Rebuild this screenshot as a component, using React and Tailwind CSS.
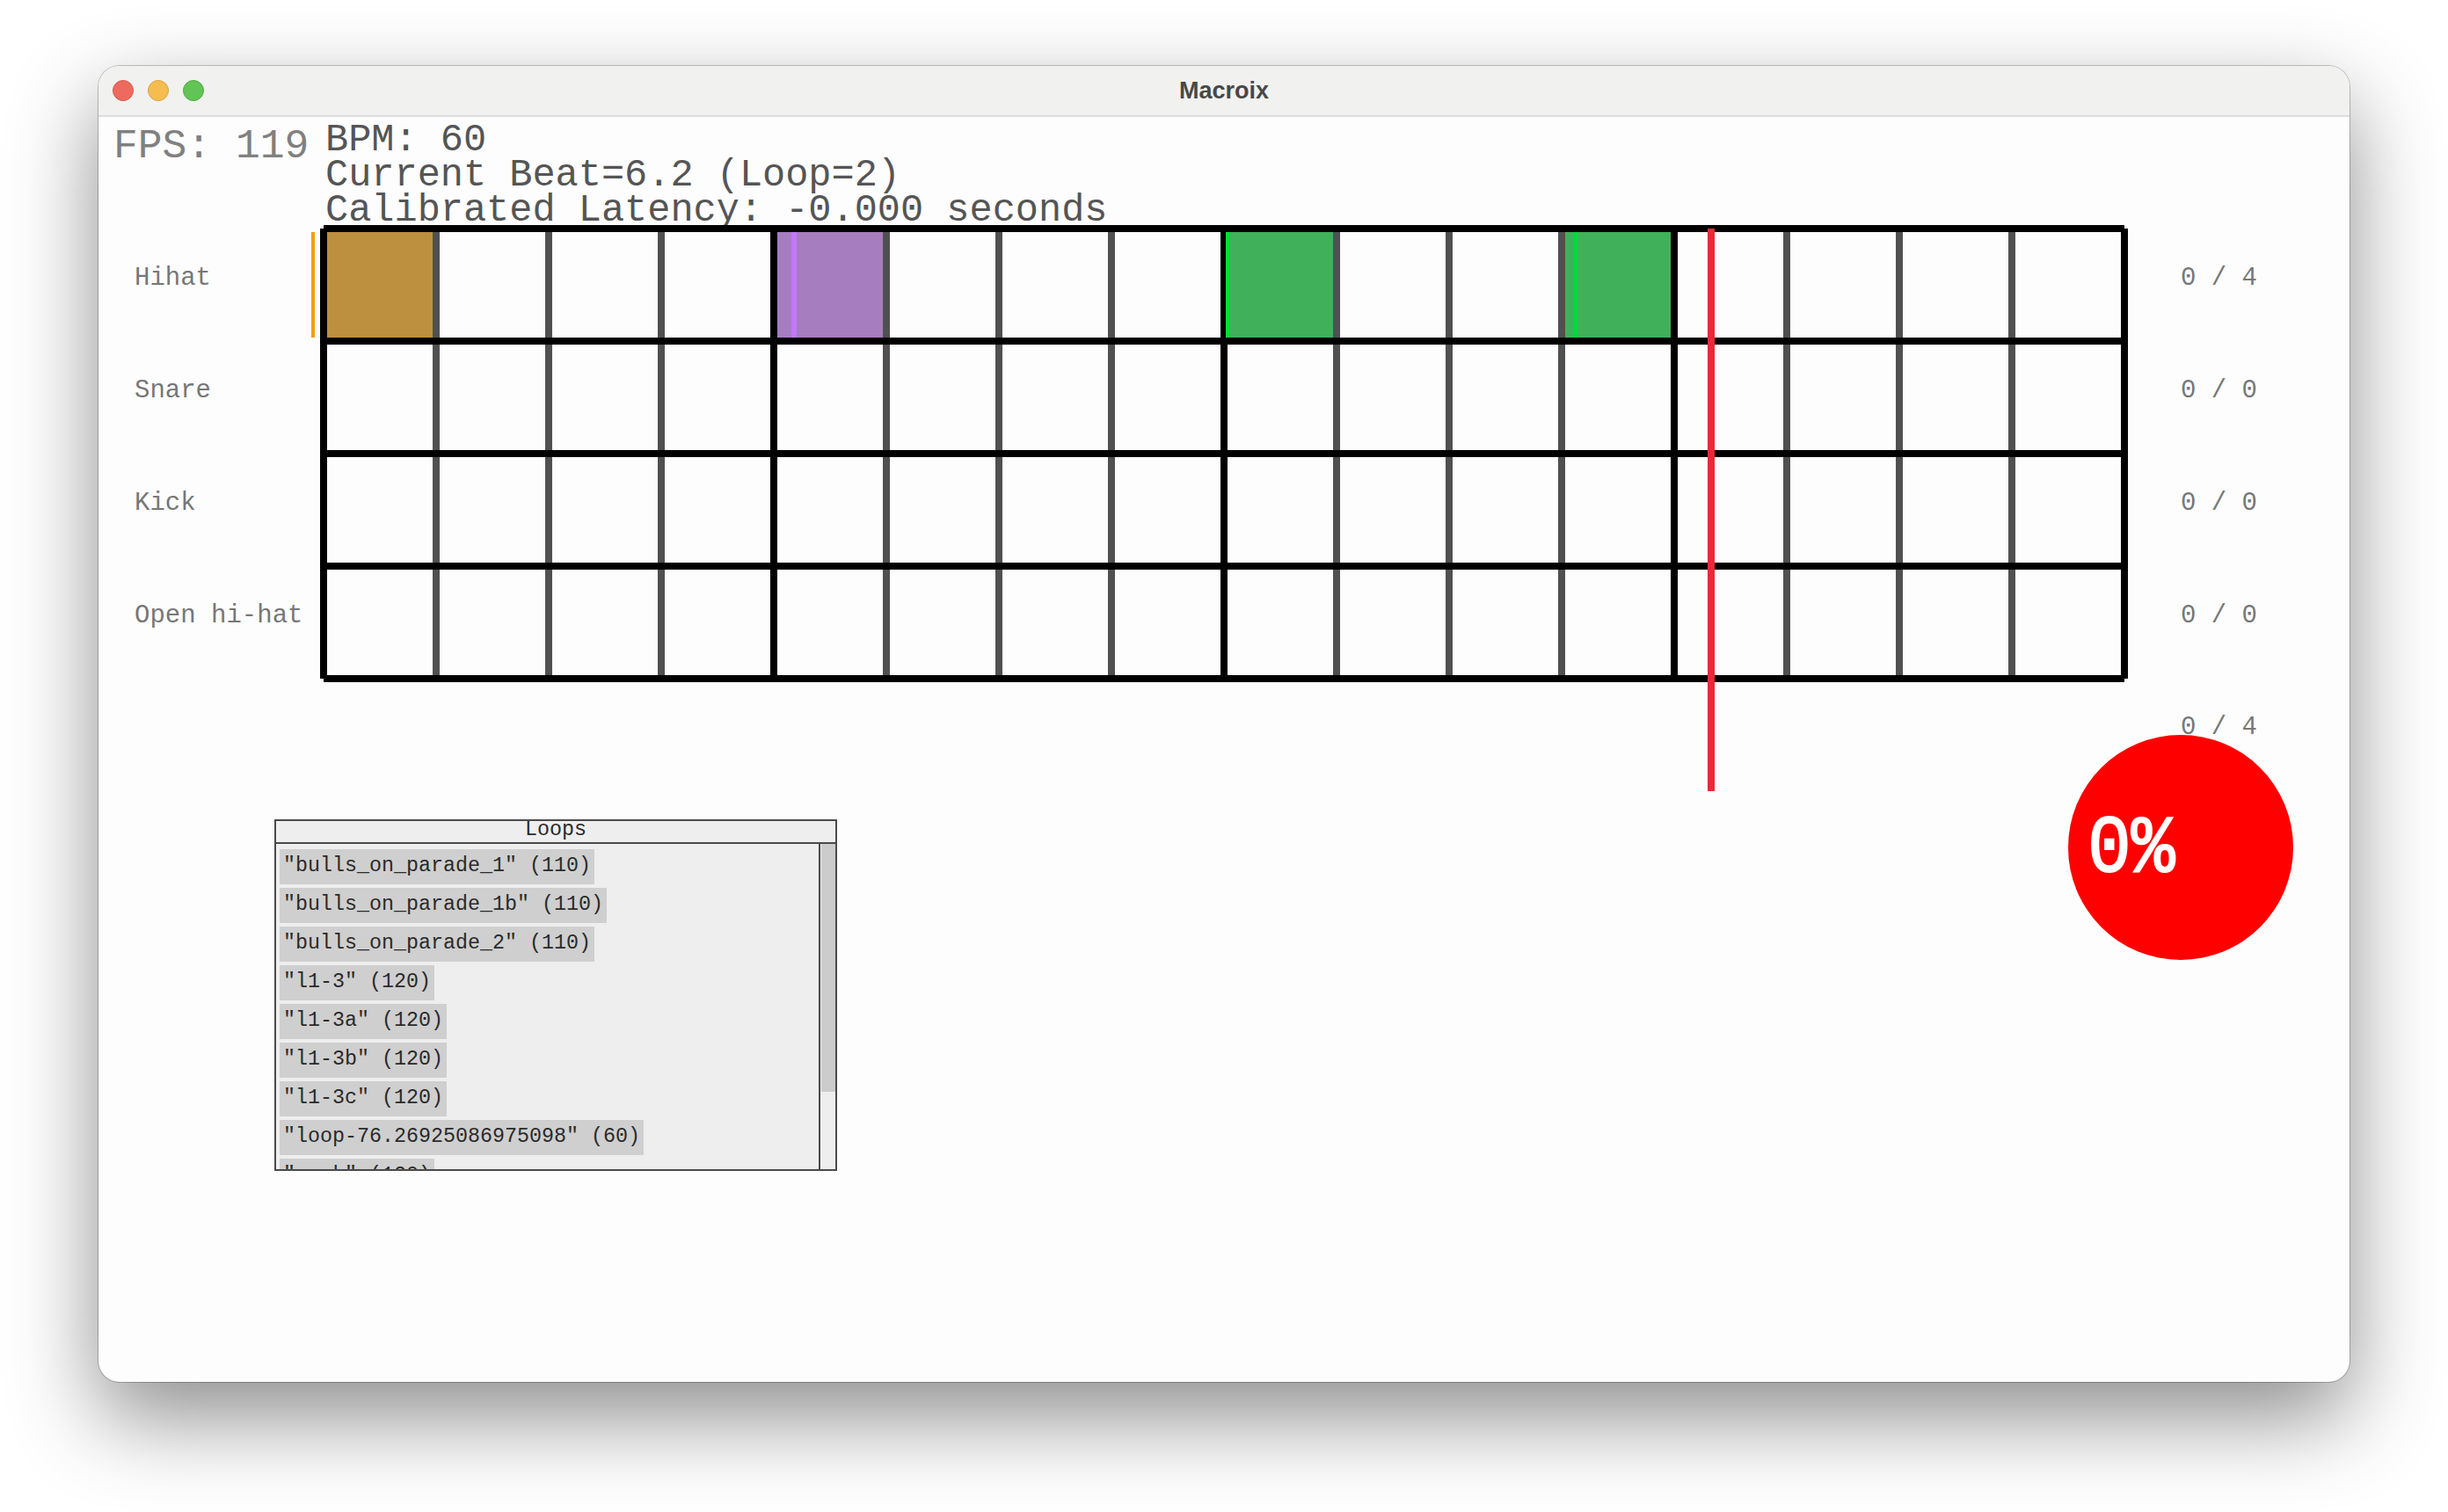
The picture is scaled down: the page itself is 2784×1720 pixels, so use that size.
const BEATS = Array.from({ length: 16 }, (_, i) => i);

const ROWS = [
  { name: "Hihat", score: "0 / 4" },
  { name: "Snare", score: "0 / 0" },
  { name: "Kick", score: "0 / 0" },
  { name: "Open hi-hat", score: "0 / 0" },
];

const LOOPS = [
  '"bulls_on_parade_1" (110)',
  '"bulls_on_parade_1b" (110)',
  '"bulls_on_parade_2" (110)',
  '"l1-3" (120)',
  '"l1-3a" (120)',
  '"l1-3b" (120)',
  '"l1-3c" (120)',
  '"loop-76.26925086975098" (60)',
  '"rock" (120)',
];

// cell fill + bright stripe for the hits on the hihat row
const HITS = {
  0: { fill: "bg-[#bd9040]" },
  4: { fill: "bg-[#a67dbf]", stripe: "bg-[#c277ff]", at: "left-[16px] w-[6px]" },
  8: { fill: "bg-[#41b05b]", stripe: "bg-[#00dc36]", at: "-left-[2px] w-[4px]" },
  11: { fill: "bg-[#41b05b]", stripe: "bg-[#00dc36]", at: "left-[10px] w-[4px]" },
};

function Cell({ beat, hit }) {
  const last = beat === 15;
  const major = beat % 4 === 0;
  return (
    <div
      className={`relative shrink-0 h-full border-l-8 ${major ? "border-black" : "border-[#505050]"} ${
        last ? "w-[136px] border-r-8 border-r-black" : "w-[128px]"
      } ${hit ? hit.fill : ""}`}
    >
      {hit?.stripe && <div className={`absolute inset-y-0 ${hit.at} ${hit.stripe}`} />}
    </div>
  );
}

function TrackRow({ row, index }) {
  return (
    <div className="flex h-[128px]">
      <div className="relative w-[252px] shrink-0 pl-[41px] pt-[41px] text-[29px] leading-[40px] text-[#777777]">
        {row.name}
        {index === 0 && <div className="absolute right-[6px] top-[8px] h-[120px] w-[4px] bg-[#f59e0b]" />}
      </div>
      <div className="w-[2056px] shrink-0 border-t-8 border-black flex">
        {BEATS.map((b) => (
          <Cell key={b} beat={b} hit={index === 0 ? HITS[b] : null} />
        ))}
      </div>
      <div className="pl-[60px] pt-[41px] text-[29px] leading-[40px] text-[#777777] whitespace-pre">{row.score}</div>
    </div>
  );
}

function LoopsPanel() {
  return (
    <div className="w-[640px] h-[400px] border-2 border-[#4a4a4a] bg-[#eeeeee] flex flex-col text-[#2a2a2a] text-[23.33px]">
      <div className="h-[26px] shrink-0 border-b-2 border-[#4a4a4a] flex justify-center leading-[21px]">Loops</div>
      <div className="flex-1 flex min-h-0">
        <div className="flex-1 overflow-hidden pl-[4px] pt-[6px] flex flex-col items-start gap-[4px]">
          {LOOPS.map((l) => (
            <div key={l} className="h-[40px] shrink-0 bg-[#cfcfcf] px-[4px] leading-[38px] whitespace-pre">
              {l}
            </div>
          ))}
        </div>
        <div className="w-[19px] shrink-0 border-l-2 border-[#4a4a4a] pl-[1px]">
          <div className="h-[282px] bg-[#cccccc]" />
        </div>
      </div>
    </div>
  );
}

export default function App() {
  return (
    <div className="min-h-screen bg-white pl-[112px] pt-[75px] font-['Liberation_Mono',monospace]">
      <div className="w-[2560px] h-[1497px] rounded-[24px] bg-[#fdfdfd] overflow-hidden shadow-[0_0_0_1px_rgba(0,0,0,0.22),0_40px_100px_rgba(0,0,0,0.45)]">
        <div className="relative h-[58px] bg-[#f1f1ef] border-b-2 border-[#dcdcdc] flex items-center pl-[16px]">
          <div className="flex gap-[16px]">
            <div className="w-[24px] h-[24px] rounded-full bg-[#ee6a5f] border border-[#d8574c]" />
            <div className="w-[24px] h-[24px] rounded-full bg-[#f5bd4f] border border-[#d9a341]" />
            <div className="w-[24px] h-[24px] rounded-full bg-[#61c454] border border-[#52a945]" />
          </div>
          <div className="absolute inset-0 flex items-center justify-center font-['Liberation_Sans',sans-serif] font-bold text-[27px] text-[#484848]">
            Macroix
          </div>
        </div>

        <div className="flex h-[123px]">
          <div className="w-[258px] shrink-0 pl-[17px] pt-[6px] text-[46.3px] leading-[56px] text-[#808080]">FPS: 119</div>
          <div className="pt-[7px] text-[43.6px] leading-[40px] text-[#555555] whitespace-pre">
            <div>BPM: 60</div>
            <div>Current Beat=6.2 (Loop=2)</div>
            <div>Calibrated Latency: -0.000 seconds</div>
          </div>
        </div>

        <div className="relative">
          {ROWS.map((r, i) => (
            <TrackRow key={r.name} row={r} index={i} />
          ))}
          <div className="ml-[252px] w-[2056px] h-[8px] bg-black" />
          {/* playhead */}
          <div className="absolute left-[1830px] top-[4px] w-[8px] h-[640px] bg-[#e62a3a]" />
          {/* line caps leave small notches at the outer corners */}
          <div className="absolute left-[252px] top-0 w-[4px] h-[4px] bg-[#fdfdfd]" />
          <div className="absolute left-[2304px] top-0 w-[4px] h-[4px] bg-[#fdfdfd]" />
          <div className="absolute left-[252px] bottom-0 w-[4px] h-[4px] bg-[#fdfdfd]" />
          <div className="absolute left-[2304px] bottom-0 w-[4px] h-[4px] bg-[#fdfdfd]" />
        </div>

        <div className="h-[72px] pl-[2368px] pt-[32px] text-[29px] leading-[40px] text-[#777777] whitespace-pre">0 / 4</div>

        <div className="flex items-start justify-between pl-[200px] pr-[64px] -mt-[12px]">
          <div className="mt-[96px]">
            <LoopsPanel />
          </div>
          <div className="relative w-[256px] h-[256px] rounded-full bg-[#ff0000] flex items-center pl-[22px] pt-[6px] text-white text-[92px] leading-none">
            <span className="origin-left scale-x-[0.9] [-webkit-text-stroke:2px_white]">0%</span>
          </div>
        </div>
      </div>
    </div>
  );
}
